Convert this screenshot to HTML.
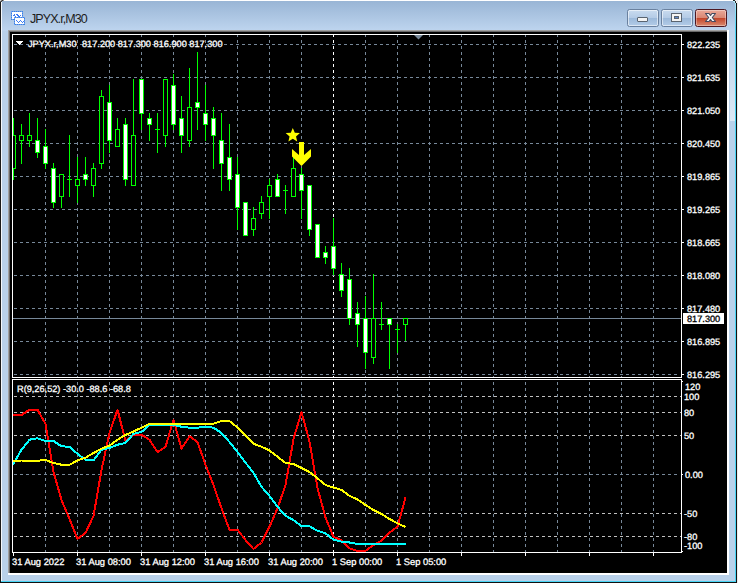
<!DOCTYPE html>
<html><head><meta charset="utf-8"><title>JPYX.r,M30</title>
<style>
html,body{margin:0;padding:0;background:#fff;}
body{width:739px;height:583px;position:relative;overflow:hidden;font-family:"Liberation Sans",sans-serif;}
.abs{position:absolute;}
#frame{left:0;top:0;width:737px;height:583px;background:#b9d1ea;}
#cap{left:1px;top:1px;width:735px;height:30px;background:linear-gradient(to bottom,#99b5d5 0px,#bdd4ee 29px);}
#title{left:30px;top:12px;font-size:12.5px;line-height:14px;color:#1c1c1c;letter-spacing:-0.92px;white-space:nowrap;}
.btn{top:9px;width:30px;height:16px;border:1px solid #6a819f;border-radius:2.5px;box-shadow:inset 0 0 0 1px rgba(255,255,255,.55);background:linear-gradient(to bottom,#c9dbef 0%,#b4cbe6 48%,#9cb9da 52%,#b3cce8 100%);}
#bclose{border-color:#4d1822;background:linear-gradient(to bottom,#eaa898 0%,#d98774 48%,#c3452a 52%,#d98a70 100%);box-shadow:inset 0 0 0 1px rgba(255,255,255,.35);}
</style></head><body>
<div id="frame" class="abs"></div>
<div class="abs" style="left:0;top:0;width:739px;height:1px;background:#fff"></div>
<div id="cap" class="abs"></div>
<div class="abs" style="left:0;top:1px;width:1px;height:582px;background:#1a1a1a"></div>
<div class="abs" style="left:1px;top:1px;width:1px;height:580px;background:#f4f8fc"></div>
<div class="abs" style="left:0;top:0;width:1px;height:1px;background:#d8d8d8"></div><div class="abs" style="left:1px;top:0;width:1px;height:1px;background:#777"></div><div class="abs" style="left:2px;top:0;width:1px;height:1px;background:#333"></div><div class="abs" style="left:3px;top:0;width:1px;height:1px;background:#999"></div><div class="abs" style="left:0;top:1px;width:1px;height:1px;background:#666"></div><div class="abs" style="left:1px;top:1px;width:1px;height:1px;background:#444"></div>
<div class="abs" style="left:735px;top:1px;width:1px;height:581px;background:#48d4f4"></div>
<div class="abs" style="left:1px;top:581px;width:735px;height:1px;background:#48d4f4"></div>
<div class="abs" style="left:736px;top:1px;width:1px;height:582px;background:#111"></div>
<div class="abs" style="left:0;top:582px;width:737px;height:1px;background:#111"></div>
<div class="abs" style="left:737px;top:0;width:2px;height:583px;background:#fff"></div>
<div class="abs" style="left:733px;top:0;width:2px;height:1px;background:#222"></div>
<div class="abs" style="left:735px;top:0;width:2px;height:3px;background:#f2f2f2"></div>
<div class="abs" style="left:733px;top:1px;width:2px;height:1px;background:#b8ecfa"></div>
<div class="abs" style="left:734px;top:2px;width:1px;height:1px;background:#b0e8f8"></div>
<div class="abs" style="left:735px;top:1px;width:1px;height:2px;background:#2a2a2a"></div>
<div class="abs" style="left:735px;top:3px;width:1px;height:26px;background:linear-gradient(to bottom,#a8e8fa,#48d4f4)"></div>
<div class="abs" style="left:737px;top:0;width:1px;height:583px;background:#ececec"></div>
<div class="abs" style="left:730px;top:31px;width:5px;height:90px;background:linear-gradient(to bottom,rgba(255,255,255,0.05),rgba(255,255,255,0.5))"></div>
<!-- client edge -->
<div class="abs" style="left:8px;top:30px;width:721px;height:545px;background:#fff"></div>
<div class="abs" style="left:8px;top:30px;width:719px;height:543px;background:#a0a0a0"></div>
<div class="abs" style="left:9px;top:31px;width:718px;height:542px;background:#696969"></div>
<div class="abs" style="left:10px;top:32px;width:717px;height:541px;background:#000"></div>
<!-- icon -->
<svg class="abs" style="left:11px;top:11px" width="15" height="15" viewBox="0 0 15 15" shape-rendering="crispEdges">
<rect x="0.5" y="0.5" width="11" height="8" fill="#fff" stroke="#6b9dfa"/>
<rect x="0.5" y="0.5" width="11" height="8" fill="none" stroke="#3f86d8" stroke-dasharray="1 1"/>
<path d="M2,4h2M3,3h1M4,5h1M5,3h2M6,4h2M7,5h2M9,4h1" stroke="#3f7df5" fill="none" transform="translate(0,0.5)"/>
<rect x="3.5" y="6.5" width="10" height="7" fill="#fff" stroke="#6b9dfa"/>
<rect x="3.5" y="6.5" width="10" height="7" fill="none" stroke="#3f86d8" stroke-dasharray="1 1"/>
<path d="M5,9h1M6,10h1M7,11h1M8,10h1M9,9h1M10,10h1M11,11h1M12,10h0.6" stroke="#3f7df5" fill="none" transform="translate(0,0.5)"/>
</svg>
<div id="title" class="abs">JPYX.r,M30</div>
<div class="abs btn" style="left:627px"><div class="abs" style="left:9px;top:7px;width:9px;height:3px;background:#f4f4f4;border:1px solid #5a6470;border-radius:1px"></div></div>
<div class="abs btn" style="left:661px"><div class="abs" style="left:10px;top:4px;width:5px;height:3px;border:2px solid #f4f4f4;outline:1px solid #5a6470;box-shadow:inset 0 0 0 1px #5a6470;background:#5e86c8"></div></div>
<div class="abs btn" id="bclose" style="left:695px"><svg class="abs" style="left:8px;top:2px" width="15" height="13" viewBox="0 0 15 13"><path d="M1.5,1.5 L5,1.5 L6.5,3.5 L8,1.5 L11.5,1.5 L8.3,5.5 L11.5,9.5 L8,9.5 L6.5,7.5 L5,9.5 L1.5,9.5 L4.7,5.5 Z" fill="#f8f8f8" stroke="#454a60" stroke-width="1.1" stroke-linejoin="round"/></svg></div>
<svg width="739" height="583" viewBox="0 0 739 583" style="position:absolute;left:0;top:0" shape-rendering="crispEdges">
<defs><clipPath id="cm"><rect x="13" y="35" width="668" height="342"/></clipPath><clipPath id="ci"><rect x="13" y="380" width="668" height="172"/></clipPath></defs>
<line x1="45.5" y1="34" x2="45.5" y2="377" stroke="#778899" stroke-dasharray="3 3"/>
<line x1="45.5" y1="382" x2="45.5" y2="552" stroke="#778899" stroke-dasharray="3 3"/>
<line x1="77.5" y1="34" x2="77.5" y2="377" stroke="#778899" stroke-dasharray="3 3"/>
<line x1="77.5" y1="382" x2="77.5" y2="552" stroke="#778899" stroke-dasharray="3 3"/>
<line x1="109.5" y1="34" x2="109.5" y2="377" stroke="#778899" stroke-dasharray="3 3"/>
<line x1="109.5" y1="382" x2="109.5" y2="552" stroke="#778899" stroke-dasharray="3 3"/>
<line x1="141.5" y1="34" x2="141.5" y2="377" stroke="#778899" stroke-dasharray="3 3"/>
<line x1="141.5" y1="382" x2="141.5" y2="552" stroke="#778899" stroke-dasharray="3 3"/>
<line x1="173.5" y1="34" x2="173.5" y2="377" stroke="#778899" stroke-dasharray="3 3"/>
<line x1="173.5" y1="382" x2="173.5" y2="552" stroke="#778899" stroke-dasharray="3 3"/>
<line x1="205.5" y1="34" x2="205.5" y2="377" stroke="#778899" stroke-dasharray="3 3"/>
<line x1="205.5" y1="382" x2="205.5" y2="552" stroke="#778899" stroke-dasharray="3 3"/>
<line x1="237.5" y1="34" x2="237.5" y2="377" stroke="#778899" stroke-dasharray="3 3"/>
<line x1="237.5" y1="382" x2="237.5" y2="552" stroke="#778899" stroke-dasharray="3 3"/>
<line x1="269.5" y1="34" x2="269.5" y2="377" stroke="#778899" stroke-dasharray="3 3"/>
<line x1="269.5" y1="382" x2="269.5" y2="552" stroke="#778899" stroke-dasharray="3 3"/>
<line x1="301.5" y1="34" x2="301.5" y2="377" stroke="#778899" stroke-dasharray="3 3"/>
<line x1="301.5" y1="382" x2="301.5" y2="552" stroke="#778899" stroke-dasharray="3 3"/>
<line x1="333.5" y1="34" x2="333.5" y2="377" stroke="#ffffff" stroke-dasharray="3 3"/>
<line x1="333.5" y1="382" x2="333.5" y2="552" stroke="#ffffff" stroke-dasharray="3 3"/>
<line x1="365.5" y1="34" x2="365.5" y2="377" stroke="#778899" stroke-dasharray="3 3"/>
<line x1="365.5" y1="382" x2="365.5" y2="552" stroke="#778899" stroke-dasharray="3 3"/>
<line x1="397.5" y1="34" x2="397.5" y2="377" stroke="#778899" stroke-dasharray="3 3"/>
<line x1="397.5" y1="382" x2="397.5" y2="552" stroke="#778899" stroke-dasharray="3 3"/>
<line x1="429.5" y1="34" x2="429.5" y2="377" stroke="#778899" stroke-dasharray="3 3"/>
<line x1="429.5" y1="382" x2="429.5" y2="552" stroke="#778899" stroke-dasharray="3 3"/>
<line x1="461.5" y1="34" x2="461.5" y2="377" stroke="#778899" stroke-dasharray="3 3"/>
<line x1="461.5" y1="382" x2="461.5" y2="552" stroke="#778899" stroke-dasharray="3 3"/>
<line x1="493.5" y1="34" x2="493.5" y2="377" stroke="#778899" stroke-dasharray="3 3"/>
<line x1="493.5" y1="382" x2="493.5" y2="552" stroke="#778899" stroke-dasharray="3 3"/>
<line x1="525.5" y1="34" x2="525.5" y2="377" stroke="#778899" stroke-dasharray="3 3"/>
<line x1="525.5" y1="382" x2="525.5" y2="552" stroke="#778899" stroke-dasharray="3 3"/>
<line x1="557.5" y1="34" x2="557.5" y2="377" stroke="#778899" stroke-dasharray="3 3"/>
<line x1="557.5" y1="382" x2="557.5" y2="552" stroke="#778899" stroke-dasharray="3 3"/>
<line x1="589.5" y1="34" x2="589.5" y2="377" stroke="#778899" stroke-dasharray="3 3"/>
<line x1="589.5" y1="382" x2="589.5" y2="552" stroke="#778899" stroke-dasharray="3 3"/>
<line x1="621.5" y1="34" x2="621.5" y2="377" stroke="#778899" stroke-dasharray="3 3"/>
<line x1="621.5" y1="382" x2="621.5" y2="552" stroke="#778899" stroke-dasharray="3 3"/>
<line x1="653.5" y1="34" x2="653.5" y2="377" stroke="#778899" stroke-dasharray="3 3"/>
<line x1="653.5" y1="382" x2="653.5" y2="552" stroke="#778899" stroke-dasharray="3 3"/>
<line x1="14" y1="44.5" x2="680" y2="44.5" stroke="#778899" stroke-dasharray="3 3"/>
<line x1="14" y1="77.5" x2="680" y2="77.5" stroke="#778899" stroke-dasharray="3 3"/>
<line x1="14" y1="110.5" x2="680" y2="110.5" stroke="#778899" stroke-dasharray="3 3"/>
<line x1="14" y1="143.5" x2="680" y2="143.5" stroke="#778899" stroke-dasharray="3 3"/>
<line x1="14" y1="176.5" x2="680" y2="176.5" stroke="#778899" stroke-dasharray="3 3"/>
<line x1="14" y1="209.5" x2="680" y2="209.5" stroke="#778899" stroke-dasharray="3 3"/>
<line x1="14" y1="242.5" x2="680" y2="242.5" stroke="#778899" stroke-dasharray="3 3"/>
<line x1="14" y1="275.5" x2="680" y2="275.5" stroke="#778899" stroke-dasharray="3 3"/>
<line x1="14" y1="308.5" x2="680" y2="308.5" stroke="#778899" stroke-dasharray="3 3"/>
<line x1="14" y1="341.5" x2="680" y2="341.5" stroke="#778899" stroke-dasharray="3 3"/>
<line x1="14" y1="374.5" x2="680" y2="374.5" stroke="#778899" stroke-dasharray="3 3"/>
<line x1="14" y1="396.5" x2="681" y2="396.5" stroke="#c0c0c0" stroke-dasharray="3 3"/>
<line x1="14" y1="412.5" x2="681" y2="412.5" stroke="#c0c0c0" stroke-dasharray="3 3"/>
<line x1="14" y1="435.5" x2="681" y2="435.5" stroke="#c0c0c0" stroke-dasharray="3 3"/>
<line x1="14" y1="474.5" x2="680" y2="474.5" stroke="#778899" stroke-dasharray="3 3"/>
<line x1="14" y1="513.5" x2="681" y2="513.5" stroke="#c0c0c0" stroke-dasharray="3 3"/>
<line x1="14" y1="536.5" x2="681" y2="536.5" stroke="#c0c0c0" stroke-dasharray="3 3"/>
<line x1="13" y1="318.5" x2="681" y2="318.5" stroke="#778899"/>
<g clip-path="url(#cm)">
<line x1="13.5" y1="118" x2="13.5" y2="180" stroke="#00ff00"/>
<rect x="11.5" y="135.5" width="4" height="33" fill="#000000" stroke="#00ff00"/>
<line x1="21.5" y1="124" x2="21.5" y2="164" stroke="#00ff00"/>
<rect x="19.5" y="135.5" width="4" height="5" fill="#000000" stroke="#00ff00"/>
<line x1="29.5" y1="113" x2="29.5" y2="147" stroke="#00ff00"/>
<rect x="27.5" y="135.5" width="4" height="5" fill="#000000" stroke="#00ff00"/>
<line x1="37.5" y1="118" x2="37.5" y2="158" stroke="#00ff00"/>
<rect x="35.5" y="140.5" width="4" height="12" fill="#ffffff" stroke="#00ff00"/>
<line x1="45.5" y1="129" x2="45.5" y2="169" stroke="#00ff00"/>
<rect x="43.5" y="146.5" width="4" height="17" fill="#ffffff" stroke="#00ff00"/>
<line x1="53.5" y1="163" x2="53.5" y2="208" stroke="#00ff00"/>
<rect x="51.5" y="168.5" width="4" height="34" fill="#ffffff" stroke="#00ff00"/>
<line x1="61.5" y1="174" x2="61.5" y2="208" stroke="#00ff00"/>
<rect x="59.5" y="174.5" width="4" height="22" fill="#000000" stroke="#00ff00"/>
<line x1="69.5" y1="135" x2="69.5" y2="197" stroke="#00ff00"/>
<line x1="67" y1="179.5" x2="72" y2="179.5" stroke="#00ff00"/>
<line x1="77.5" y1="157" x2="77.5" y2="203" stroke="#00ff00"/>
<rect x="75.5" y="179.5" width="4" height="6" fill="#000000" stroke="#00ff00"/>
<line x1="85.5" y1="157" x2="85.5" y2="186" stroke="#00ff00"/>
<rect x="83.5" y="174.5" width="4" height="5" fill="#ffffff" stroke="#00ff00"/>
<line x1="93.5" y1="163" x2="93.5" y2="197" stroke="#00ff00"/>
<rect x="91.5" y="168.5" width="4" height="17" fill="#000000" stroke="#00ff00"/>
<line x1="101.5" y1="90" x2="101.5" y2="169" stroke="#00ff00"/>
<rect x="99.5" y="96.5" width="4" height="67" fill="#000000" stroke="#00ff00"/>
<line x1="109.5" y1="85" x2="109.5" y2="153" stroke="#00ff00"/>
<rect x="107.5" y="102.5" width="4" height="38" fill="#ffffff" stroke="#00ff00"/>
<line x1="117.5" y1="118" x2="117.5" y2="147" stroke="#00ff00"/>
<rect x="115.5" y="129.5" width="4" height="17" fill="#000000" stroke="#00ff00"/>
<line x1="125.5" y1="118" x2="125.5" y2="186" stroke="#00ff00"/>
<rect x="123.5" y="124.5" width="4" height="55" fill="#ffffff" stroke="#00ff00"/>
<line x1="133.5" y1="79" x2="133.5" y2="186" stroke="#00ff00"/>
<rect x="131.5" y="135.5" width="4" height="50" fill="#000000" stroke="#00ff00"/>
<line x1="141.5" y1="79" x2="141.5" y2="130" stroke="#00ff00"/>
<rect x="139.5" y="79.5" width="4" height="34" fill="#ffffff" stroke="#00ff00"/>
<line x1="149.5" y1="113" x2="149.5" y2="141" stroke="#00ff00"/>
<rect x="147.5" y="118.5" width="4" height="6" fill="#ffffff" stroke="#00ff00"/>
<line x1="157.5" y1="113" x2="157.5" y2="153" stroke="#00ff00"/>
<line x1="155" y1="129.5" x2="160" y2="129.5" stroke="#00ff00"/>
<line x1="165.5" y1="79" x2="165.5" y2="147" stroke="#00ff00"/>
<rect x="163.5" y="79.5" width="4" height="56" fill="#000000" stroke="#00ff00"/>
<line x1="173.5" y1="74" x2="173.5" y2="130" stroke="#00ff00"/>
<rect x="171.5" y="85.5" width="4" height="39" fill="#ffffff" stroke="#00ff00"/>
<line x1="181.5" y1="96" x2="181.5" y2="153" stroke="#00ff00"/>
<rect x="179.5" y="118.5" width="4" height="17" fill="#ffffff" stroke="#00ff00"/>
<line x1="189.5" y1="68" x2="189.5" y2="147" stroke="#00ff00"/>
<rect x="187.5" y="107.5" width="4" height="33" fill="#000000" stroke="#00ff00"/>
<line x1="197.5" y1="52" x2="197.5" y2="130" stroke="#00ff00"/>
<rect x="195.5" y="102.5" width="4" height="5" fill="#ffffff" stroke="#00ff00"/>
<line x1="205.5" y1="85" x2="205.5" y2="141" stroke="#00ff00"/>
<rect x="203.5" y="113.5" width="4" height="11" fill="#ffffff" stroke="#00ff00"/>
<line x1="213.5" y1="107" x2="213.5" y2="169" stroke="#00ff00"/>
<rect x="211.5" y="118.5" width="4" height="17" fill="#ffffff" stroke="#00ff00"/>
<line x1="221.5" y1="113" x2="221.5" y2="191" stroke="#00ff00"/>
<rect x="219.5" y="140.5" width="4" height="23" fill="#ffffff" stroke="#00ff00"/>
<line x1="229.5" y1="124" x2="229.5" y2="191" stroke="#00ff00"/>
<rect x="227.5" y="157.5" width="4" height="22" fill="#ffffff" stroke="#00ff00"/>
<line x1="237.5" y1="157" x2="237.5" y2="230" stroke="#00ff00"/>
<rect x="235.5" y="174.5" width="4" height="33" fill="#ffffff" stroke="#00ff00"/>
<line x1="245.5" y1="202" x2="245.5" y2="236" stroke="#00ff00"/>
<rect x="243.5" y="202.5" width="4" height="33" fill="#ffffff" stroke="#00ff00"/>
<line x1="253.5" y1="207" x2="253.5" y2="236" stroke="#00ff00"/>
<rect x="251.5" y="218.5" width="4" height="11" fill="#000000" stroke="#00ff00"/>
<line x1="261.5" y1="196" x2="261.5" y2="219" stroke="#00ff00"/>
<rect x="259.5" y="202.5" width="4" height="11" fill="#000000" stroke="#00ff00"/>
<line x1="269.5" y1="179" x2="269.5" y2="219" stroke="#00ff00"/>
<rect x="267.5" y="185.5" width="4" height="11" fill="#000000" stroke="#00ff00"/>
<line x1="277.5" y1="174" x2="277.5" y2="197" stroke="#00ff00"/>
<rect x="275.5" y="179.5" width="4" height="17" fill="#ffffff" stroke="#00ff00"/>
<line x1="285.5" y1="185" x2="285.5" y2="214" stroke="#00ff00"/>
<line x1="283" y1="190.5" x2="288" y2="190.5" stroke="#00ff00"/>
<line x1="293.5" y1="157" x2="293.5" y2="197" stroke="#00ff00"/>
<rect x="291.5" y="168.5" width="4" height="28" fill="#000000" stroke="#00ff00"/>
<line x1="301.5" y1="168" x2="301.5" y2="219" stroke="#00ff00"/>
<rect x="299.5" y="174.5" width="4" height="16" fill="#ffffff" stroke="#00ff00"/>
<line x1="309.5" y1="185" x2="309.5" y2="236" stroke="#00ff00"/>
<rect x="307.5" y="185.5" width="4" height="44" fill="#ffffff" stroke="#00ff00"/>
<line x1="317.5" y1="224" x2="317.5" y2="258" stroke="#00ff00"/>
<rect x="315.5" y="224.5" width="4" height="33" fill="#ffffff" stroke="#00ff00"/>
<line x1="325.5" y1="246" x2="325.5" y2="264" stroke="#00ff00"/>
<rect x="323.5" y="252.5" width="4" height="5" fill="#ffffff" stroke="#00ff00"/>
<line x1="333.5" y1="218" x2="333.5" y2="275" stroke="#00ff00"/>
<rect x="331.5" y="246.5" width="4" height="22" fill="#ffffff" stroke="#00ff00"/>
<line x1="341.5" y1="263" x2="341.5" y2="297" stroke="#00ff00"/>
<rect x="339.5" y="274.5" width="4" height="16" fill="#ffffff" stroke="#00ff00"/>
<line x1="349.5" y1="268" x2="349.5" y2="325" stroke="#00ff00"/>
<rect x="347.5" y="279.5" width="4" height="39" fill="#ffffff" stroke="#00ff00"/>
<line x1="357.5" y1="302" x2="357.5" y2="347" stroke="#00ff00"/>
<rect x="355.5" y="313.5" width="4" height="11" fill="#ffffff" stroke="#00ff00"/>
<line x1="365.5" y1="296" x2="365.5" y2="369" stroke="#00ff00"/>
<rect x="363.5" y="318.5" width="4" height="34" fill="#ffffff" stroke="#00ff00"/>
<line x1="373.5" y1="274" x2="373.5" y2="364" stroke="#00ff00"/>
<rect x="371.5" y="318.5" width="4" height="39" fill="#000000" stroke="#00ff00"/>
<line x1="381.5" y1="302" x2="381.5" y2="330" stroke="#00ff00"/>
<line x1="379" y1="324.5" x2="384" y2="324.5" stroke="#00ff00"/>
<line x1="389.5" y1="318" x2="389.5" y2="369" stroke="#00ff00"/>
<rect x="387.5" y="318.5" width="4" height="6" fill="#ffffff" stroke="#00ff00"/>
<line x1="397.5" y1="324" x2="397.5" y2="353" stroke="#00ff00"/>
<line x1="395" y1="329.5" x2="400" y2="329.5" stroke="#00ff00"/>
<line x1="405.5" y1="318" x2="405.5" y2="341" stroke="#00ff00"/>
<rect x="403.5" y="318.5" width="4" height="6" fill="#000000" stroke="#00ff00"/>
</g>
<polygon points="292.80,127.90 294.80,132.65 299.93,133.08 296.03,136.45 297.21,141.47 292.80,138.80 288.39,141.47 289.57,136.45 285.67,133.08 290.80,132.65" fill="#ffff00" shape-rendering="geometricPrecision"/>
<polygon points="299,142 304,142 304,155 311,149 311,156.5 301.5,166 292,156.5 292,149 299,155" fill="#ffff00" shape-rendering="geometricPrecision"/>
<g clip-path="url(#ci)" shape-rendering="crispEdges" fill="none" stroke-width="2" stroke-linejoin="round">
<polyline points="12.5,415 13.5,415 21.5,415 29.5,409.7 37.5,409.7 45.5,424 53.5,472 61.5,500 69.5,519 77.5,539 85.5,533 93.5,516 101.5,470 109.5,433 117.5,409.7 125.5,441 133.5,435 141.5,434.7 149.5,439.7 157.5,452 165.5,447 173.5,419.7 181.5,448.8 189.5,436.3 197.5,442 205.5,464.7 213.5,485 221.5,508.3 229.5,529.7 237.5,529.7 245.5,540 253.5,549 261.5,542.5 269.5,526.7 277.5,508.3 285.5,485 293.5,439 301.5,412 309.5,441.7 317.5,488 325.5,517.5 333.5,537 341.5,540 349.5,548.3 357.5,551 365.5,551 373.5,545 381.5,540.8 389.5,532.5 397.5,526.7 405.5,497.5" stroke="#ff0000"/>
<polyline points="12.5,463.8 13.5,463.8 21.5,449.7 29.5,439.7 37.5,438.3 45.5,441 53.5,441 61.5,446.3 69.5,446.8 77.5,453.8 85.5,459.7 93.5,460.5 101.5,449.7 109.5,448 117.5,444.7 125.5,443 133.5,433.8 141.5,432 149.5,425 157.5,425 165.5,425 173.5,425 181.5,426.7 189.5,427.7 197.5,427.7 205.5,426.7 213.5,427.7 221.5,433 229.5,442 237.5,452 245.5,462.5 253.5,473 261.5,486.7 269.5,496 277.5,506.7 285.5,515.8 293.5,520 301.5,526.3 309.5,526.3 317.5,530.8 325.5,533.3 333.5,539.7 341.5,541.7 349.5,542.5 357.5,544 365.5,544 373.5,544 381.5,544 389.5,544 397.5,544 405.5,544" stroke="#00ffff"/>
<polyline points="12.5,460.8 13.5,460.8 21.5,460.5 29.5,460.5 37.5,460.8 45.5,460 53.5,463 61.5,464.7 69.5,464.7 77.5,460.5 85.5,457.7 93.5,453 101.5,448.8 109.5,445.5 117.5,439.7 125.5,435 133.5,431.5 141.5,427.7 149.5,423.8 157.5,423.8 165.5,423.8 173.5,423.8 181.5,423.8 189.5,423.8 197.5,423.8 205.5,423.8 213.5,423.8 221.5,421 229.5,421 237.5,427.5 245.5,435.8 253.5,443.7 261.5,446.7 269.5,450.5 277.5,456.7 285.5,463 293.5,464 301.5,468 309.5,472 317.5,478.3 325.5,485 333.5,487.5 341.5,490 349.5,495.8 357.5,499.5 365.5,505 373.5,510 381.5,514 389.5,519 397.5,523.3 405.5,527" stroke="#ffff00"/>
</g>
<rect x="12.5" y="34.5" width="669" height="343" fill="none" stroke="#fff"/>
<rect x="12.5" y="379.5" width="669" height="173" fill="none" stroke="#fff"/>
<line x1="682" y1="44.5" x2="684" y2="44.5" stroke="#fff"/>
<line x1="682" y1="77.5" x2="684" y2="77.5" stroke="#fff"/>
<line x1="682" y1="110.5" x2="684" y2="110.5" stroke="#fff"/>
<line x1="682" y1="143.5" x2="684" y2="143.5" stroke="#fff"/>
<line x1="682" y1="176.5" x2="684" y2="176.5" stroke="#fff"/>
<line x1="682" y1="209.5" x2="684" y2="209.5" stroke="#fff"/>
<line x1="682" y1="242.5" x2="684" y2="242.5" stroke="#fff"/>
<line x1="682" y1="275.5" x2="684" y2="275.5" stroke="#fff"/>
<line x1="682" y1="308.5" x2="684" y2="308.5" stroke="#fff"/>
<line x1="682" y1="341.5" x2="684" y2="341.5" stroke="#fff"/>
<line x1="682" y1="374.5" x2="684" y2="374.5" stroke="#fff"/>
<line x1="682" y1="381.5" x2="683" y2="381.5" stroke="#fff"/>
<line x1="682" y1="474.5" x2="683" y2="474.5" stroke="#fff"/>
<line x1="682" y1="551.5" x2="683" y2="551.5" stroke="#fff"/>
<line x1="13.5" y1="553" x2="13.5" y2="556" stroke="#fff"/>
<line x1="77.5" y1="553" x2="77.5" y2="556" stroke="#fff"/>
<line x1="141.5" y1="553" x2="141.5" y2="556" stroke="#fff"/>
<line x1="205.5" y1="553" x2="205.5" y2="556" stroke="#fff"/>
<line x1="269.5" y1="553" x2="269.5" y2="556" stroke="#fff"/>
<line x1="333.5" y1="553" x2="333.5" y2="556" stroke="#fff"/>
<line x1="397.5" y1="553" x2="397.5" y2="556" stroke="#fff"/>
<line x1="461.5" y1="553" x2="461.5" y2="556" stroke="#fff"/>
<line x1="525.5" y1="553" x2="525.5" y2="556" stroke="#fff"/>
<line x1="589.5" y1="553" x2="589.5" y2="556" stroke="#fff"/>
<line x1="653.5" y1="553" x2="653.5" y2="556" stroke="#fff"/>
<polygon points="414,35 423,35 418.5,39.5" fill="#778899" shape-rendering="geometricPrecision"/>
<polygon points="16,41 23,41 19.5,44.5" fill="#fff"/>
<rect x="16" y="41" width="7" height="1" fill="#fff"/>
<rect x="17" y="42" width="5" height="1" fill="#fff"/>
<rect x="18" y="43" width="3" height="1" fill="#fff"/>
<rect x="19" y="44" width="1" height="1" fill="#fff"/>
<rect x="683" y="313" width="41" height="11" fill="#fff"/>
<g font-family="Liberation Sans, sans-serif" font-size="9.2px" fill="#fff" stroke="#fff" stroke-width="0.3" shape-rendering="auto" text-rendering="geometricPrecision">
<text x="687" y="48">822.235</text>
<text x="687" y="81">821.635</text>
<text x="687" y="114">821.050</text>
<text x="687" y="147">820.450</text>
<text x="687" y="180">819.865</text>
<text x="687" y="213">819.265</text>
<text x="687" y="246">818.665</text>
<text x="687" y="279">818.080</text>
<text x="687" y="312">817.480</text>
<text x="687" y="345">816.895</text>
<text x="687" y="378">816.295</text>
<text x="687" y="322" fill="#000" stroke="#000">817.300</text>
<text x="685" y="390">120</text>
<text x="684" y="400">100</text>
<text x="684" y="416">80</text>
<text x="684" y="439">50</text>
<text x="685" y="478">0.00</text>
<text x="684" y="517">-50</text>
<text x="684" y="540">-80</text>
<text x="684" y="549">-100</text>
<text x="28" y="47">JPYX.r,M30</text><text x="82" y="47">817.200 817.300 816.900 817.300</text>
<text x="17" y="392">R(9,26,52) -30.0 -88.6 -68.8</text>
<text x="12" y="565" font-size="9.33px">31 Aug 2022</text>
<text x="76" y="565" font-size="9.33px">31 Aug 08:00</text>
<text x="140" y="565" font-size="9.33px">31 Aug 12:00</text>
<text x="204" y="565" font-size="9.33px">31 Aug 16:00</text>
<text x="268" y="565" font-size="9.33px">31 Aug 20:00</text>
<text x="332" y="565" font-size="9.33px">1 Sep 00:00</text>
<text x="396" y="565" font-size="9.33px">1 Sep 05:00</text>
</g>
</svg>
</body></html>
